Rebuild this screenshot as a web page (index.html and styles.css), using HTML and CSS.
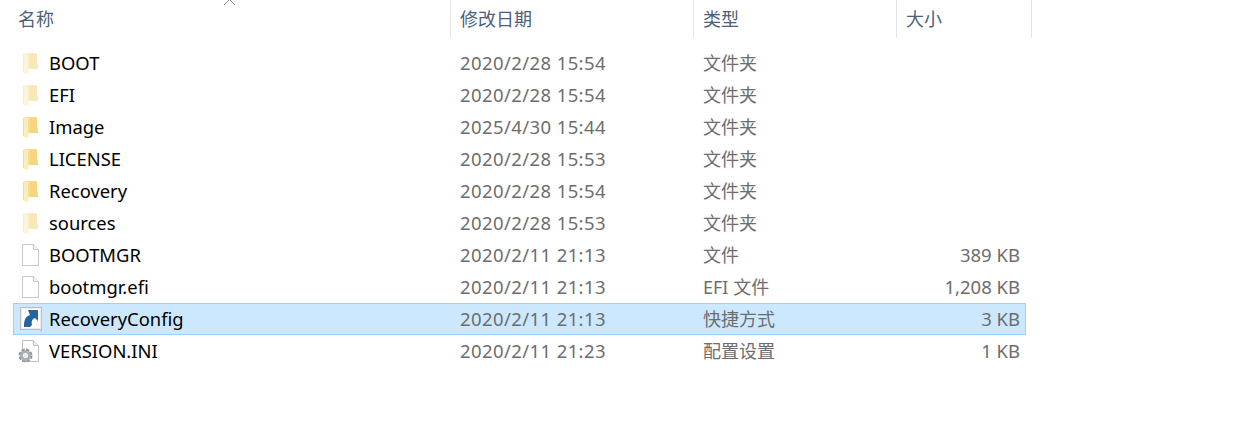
FILE: index.html
```html
<!DOCTYPE html>
<html lang="zh-CN">
<head>
  <meta charset="UTF-8">
  <title>文件列表</title>
  <link rel="stylesheet" href="styles.css">
</head>
<body>
  <svg class="defs" width="0" height="0">
    <symbol id="folder" viewBox="0 0 16 22">
      <path d="M5 0H14V11H15V16H5Z" fill="#f8dc8f"/>
      <path d="M7 1H14V12L15 16H7Z" fill="#f5d67e"/>
      <path d="M0 1L5 0V16L6 17L5 21L1 20L0 19Z" fill="#fdeeb8"/>
      <path d="M0 1L5 0V1L1 2V19L0 19Z" fill="#f3dc9c"/>
    </symbol>
    <symbol id="file" viewBox="0 0 17 22">
      <path d="M.5.5H11.500L16.500 5.500V21.500H.5Z" fill="#fff" stroke="#c9c9c9"/>
      <path d="M11.500 .5V5.500H16.500" fill="#f2f2f2" stroke="#c9c9c9"/>
    </symbol>
    <symbol id="shortcut" viewBox="0 0 22 25">
      <rect x=".5" y=".5" width="21" height="22" fill="#eee" stroke="#bdbdbd"/>
      <rect x="2" y="2" width="18" height="19" fill="#fff"/>
      <path d="M4 20C4 13 5 10 10 8L8 3H18V14L15 11C12 12 11 15 12 18L10 20Z" fill="#24659f"/>
      <path d="M20 23H22V25H20Z" fill="#c4d3df"/>
    </symbol>
    <symbol id="config" viewBox="0 0 24 24">
      <path d="M4.500 1.500H15.500L20.500 6.500V22.500H4.500Z" fill="#fff" stroke="#bfbfbf"/>
      <path d="M15.500 1.500V6.500H20.500" fill="#eee" stroke="#bfbfbf"/>
      <circle cx="7.500" cy="16.500" r="5.500" fill="none" stroke="#8e9498" stroke-width="3" stroke-dasharray="3 1.300"/>
      <circle cx="7.500" cy="16.500" r="4" fill="none" stroke="#a9aeb2" stroke-width="3"/>
      <circle cx="7.500" cy="16.500" r="1.800" fill="#e4e6e8"/>
    </symbol>
  </svg>

  <div class="header">
    <div class="col-head name-head">名称<svg class="sort" width="13" height="6" viewBox="0 0 13 6"><path d="M1 6L6.500 .5L12 6" fill="none" stroke="#8a8f94"/></svg></div>
    <div class="col-head date-head">修改日期</div>
    <div class="col-head type-head">类型</div>
    <div class="col-head size-head">大小</div>
  </div>

  <div class="list">
    <div class="row">
      <div class="name"><svg class="icon folder hidden"><use href="#folder"/></svg>BOOT</div>
      <div class="date">2020/2/28 15:54</div><div class="type">文件夹</div><div class="size"></div>
    </div>
    <div class="row">
      <div class="name"><svg class="icon folder hidden"><use href="#folder"/></svg>EFI</div>
      <div class="date">2020/2/28 15:54</div><div class="type">文件夹</div><div class="size"></div>
    </div>
    <div class="row">
      <div class="name"><svg class="icon folder"><use href="#folder"/></svg>Image</div>
      <div class="date">2025/4/30 15:44</div><div class="type">文件夹</div><div class="size"></div>
    </div>
    <div class="row">
      <div class="name"><svg class="icon folder"><use href="#folder"/></svg>LICENSE</div>
      <div class="date">2020/2/28 15:53</div><div class="type">文件夹</div><div class="size"></div>
    </div>
    <div class="row">
      <div class="name"><svg class="icon folder"><use href="#folder"/></svg>Recovery</div>
      <div class="date">2020/2/28 15:54</div><div class="type">文件夹</div><div class="size"></div>
    </div>
    <div class="row">
      <div class="name"><svg class="icon folder hidden"><use href="#folder"/></svg>sources</div>
      <div class="date">2020/2/28 15:53</div><div class="type">文件夹</div><div class="size"></div>
    </div>
    <div class="row">
      <div class="name"><svg class="icon file"><use href="#file"/></svg>BOOTMGR</div>
      <div class="date">2020/2/11 21:13</div><div class="type">文件</div><div class="size">389 KB</div>
    </div>
    <div class="row">
      <div class="name"><svg class="icon file"><use href="#file"/></svg>bootmgr.efi</div>
      <div class="date">2020/2/11 21:13</div><div class="type">EFI 文件</div><div class="size">1,208 KB</div>
    </div>
    <div class="row selected">
      <div class="name"><svg class="icon shortcut"><use href="#shortcut"/></svg>RecoveryConfig</div>
      <div class="date">2020/2/11 21:13</div><div class="type">快捷方式</div><div class="size">3 KB</div>
    </div>
    <div class="row">
      <div class="name"><svg class="icon config"><use href="#config"/></svg>VERSION.INI</div>
      <div class="date">2020/2/11 21:23</div><div class="type">配置设置</div><div class="size">1 KB</div>
    </div>
  </div>
</body>
</html>
```

FILE: styles.css
```css
* {
  box-sizing: border-box;
}
html, body {
  margin: 0;
  padding: 0;
  background: #fff;
  overflow: hidden;
}
body {
  height: 439px;
  font-family: "Noto Sans", "Noto Sans CJK SC", sans-serif;
  font-size: 18px;
  color: #6d6d6d;
}
.defs {
  position: absolute;
}
.header {
  display: flex;
  height: 38px;
}
.col-head {
  border-right: 1px solid #e5e5e5;
  padding-left: 9px;
  line-height: 36px;
  color: #4c607a;
  font-family: "Noto Sans CJK SC", sans-serif;
  font-size: 18px;
}
.name-head {
  position: relative;
  width: 451px;
  padding-left: 18px;
}
.sort {
  position: absolute;
  left: 223px;
  top: -1px;
}
.date-head {
  width: 243px;
}
.type-head {
  width: 203px;
}
.size-head {
  width: 135px;
}
.list {
  margin: 9px 0 0 13px;
  width: 1013px;
}
.row {
  display: flex;
  height: 32px;
  line-height: 30px;
  border: 1px solid transparent;
}
.row.selected {
  background: #cce8ff;
  border-color: #99d1ff;
}
.name {
  display: flex;
  align-items: center;
  width: 446px;
  padding-left: 7px;
  font-size: 18.4px;
  color: #000;
}
.folder {
  flex: none;
  width: 16px;
  height: 22px;
  margin: 1px 10px 0 2px;
}
.folder.hidden {
  opacity: .55;
}
.file {
  flex: none;
  width: 17px;
  height: 22px;
  margin: 0 10px 0 1px;
}
.shortcut {
  flex: none;
  width: 22px;
  height: 25px;
  margin: 0 7px 0 -1px;
}
.config {
  flex: none;
  width: 24px;
  height: 24px;
  margin: 0 7px 0 -3px;
}
.date {
  width: 243px;
  font-size: 18.5px;
  letter-spacing: .4px;
}
.type {
  width: 203px;
}
.size {
  width: 114px;
  font-size: 18.5px;
  text-align: right;
}
```
